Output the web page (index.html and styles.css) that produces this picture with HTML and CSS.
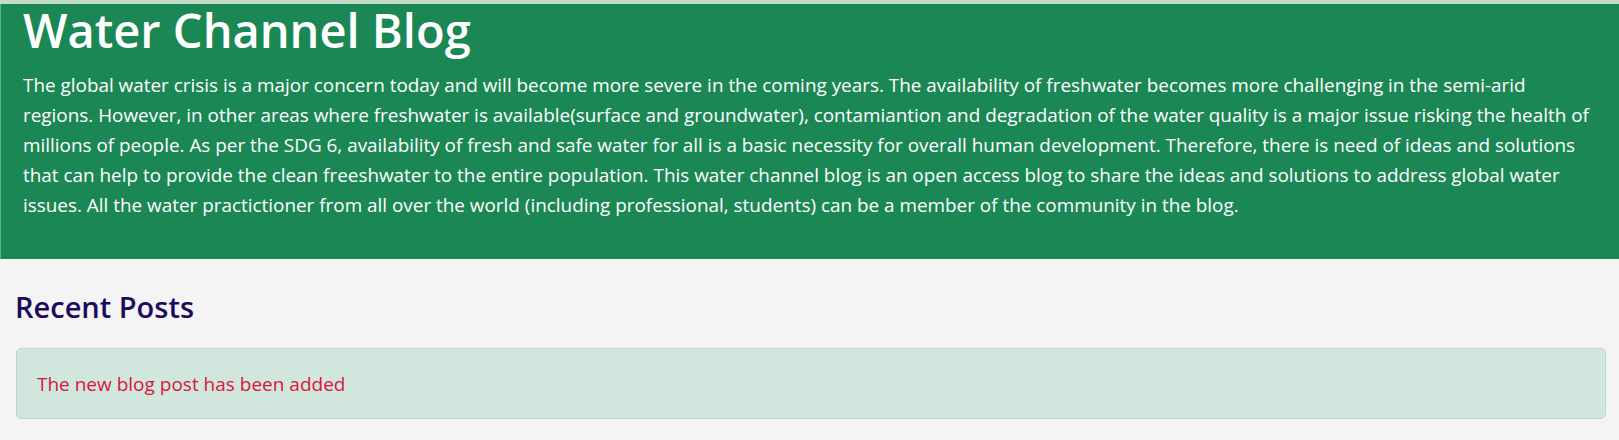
FILE: index.html
```html
<!DOCTYPE html>
<html lang="en">
<head>
<meta charset="utf-8">
<title>Water Channel Blog</title>
<link rel="stylesheet" href="styles.css">
</head>
<body>
<div class="topbar"></div>
<header class="hero">
  <h1 class="hero-title">Water Channel Blog</h1>
  <p class="hero-text">The global water crisis is a major concern today and will become more severe in the coming years. The availability of freshwater becomes more challenging in the semi-arid regions. However, in other areas where freshwater is available(surface and groundwater), contamiantion and degradation of the water quality is a major issue risking the health of millions of people. As per the SDG 6, availability of fresh and safe water for all is a basic necessity for overall human development. Therefore, there is need of ideas and solutions that can help to provide the clean freeshwater to the entire population. This water channel blog is an open access blog to share the ideas and solutions to address global water issues. All the water practictioner from all over the world (including professional, students) can be a member of the community in the blog.</p>
</header>
<main class="content">
  <h2 class="section-title">Recent Posts</h2>
  <div class="alert">The new blog post has been added</div>
</main>
</body>
</html>
```
FILE: styles.css
```css
html, body {
  margin: 0;
  padding: 0;
}
body {
  background: #f4f4f4;
  font-family: "Open Sans", "Noto Sans", sans-serif;
}
.topbar {
  height: 4px;
  background: #c3dcc8;
}
.hero {
  background: #1b8755;
  color: #ffffff;
  padding: 0 23px 39px 22px;
  border-left: 1px solid #5fae88;
}
.hero-title {
  margin: 0;
  font-size: 47px;
  line-height: 52px;
  font-weight: 600;
}
.hero-text {
  margin: 14px 0 0;
  font-size: 18.9px;
  line-height: 30px;
}
.content {
  padding: 30px 13px 0 16px;
}
.section-title {
  margin: 0 0 0 -1px;
  font-size: 29px;
  line-height: 36px;
  font-weight: 600;
  color: #1c0b5c;
}
.alert {
  margin-top: 23px;
  background: #d1e7dd;
  border: 1px solid #bcdacc;
  border-radius: 5px;
  padding: 20px 20px 19px;
  font-size: 19px;
  line-height: 30px;
  color: #dc143c;
}
```
